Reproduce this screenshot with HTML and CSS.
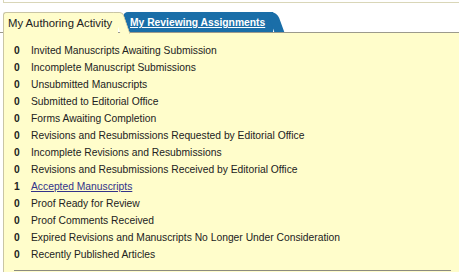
FILE: index.html
```html
<!DOCTYPE html>
<html lang="en">
<head>
    <meta charset="UTF-8">
    <title>Author Dashboard</title>
    <link rel="stylesheet" href="styles.css">
</head>
<body>
    <div class="topbox"></div>

    <div class="tabs">
        <div class="tab active">My Authoring Activity</div>
        <div class="tab other"><a href="#">My Reviewing Assignments</a></div>
    </div>

    <div class="panel">
        <ul class="queue">
            <li><b>0</b><span>Invited Manuscripts Awaiting Submission</span></li>
            <li><b>0</b><span>Incomplete Manuscript Submissions</span></li>
            <li><b>0</b><span>Unsubmitted Manuscripts</span></li>
            <li><b>0</b><span>Submitted to Editorial Office</span></li>
            <li><b>0</b><span>Forms Awaiting Completion</span></li>
            <li><b>0</b><span>Revisions and Resubmissions Requested by Editorial Office</span></li>
            <li><b>0</b><span>Incomplete Revisions and Resubmissions</span></li>
            <li><b>0</b><span>Revisions and Resubmissions Received by Editorial Office</span></li>
            <li><b>1</b><a href="#">Accepted Manuscripts</a></li>
            <li><b>0</b><span>Proof Ready for Review</span></li>
            <li><b>0</b><span>Proof Comments Received</span></li>
            <li><b>0</b><span>Expired Revisions and Manuscripts No Longer Under Consideration</span></li>
            <li><b>0</b><span>Recently Published Articles</span></li>
        </ul>
        <div class="rule"></div>
    </div>
</body>
</html>
```

FILE: styles.css
```css
body {
    margin: 0;
    font-family: "Liberation Sans", Arial, sans-serif;
    font-size: 10.3px;
    color: #222;
    background: #fff;
}
.topbox {
    height: 2px;
    margin-left: 3px;
    border-left: 1px solid #d9d6b8;
    border-bottom: 1px solid #d9d6b8;
}
.tabs {
    display: flex;
    margin-top: 9px;
    padding-left: 3px;
    height: 20px;
    border-bottom: 1px solid #9c9a8c;
}
.tab {
    position: relative;
    height: 20px;
    line-height: 21px;
    white-space: nowrap;
}
.tab.active {
    z-index: 2;
    padding: 0 4px;
    width: 106px;
    font-size: 11.3px;
    background: #fffdcb;
    border-left: 1px solid #c9c5a4;
    border-top: 1px solid #c9c5a4;
    border-top-left-radius: 3px;
    margin-bottom: -1px;
}
.tab.active::after {
    content: "";
    position: absolute;
    top: -1px;
    right: -5px;
    width: 9px;
    height: 21px;
    background: #fffdcb;
    border-top: 1px solid #c9c5a4;
    border-right: 1px solid #c9c5a4;
    border-top-right-radius: 4px;
    transform: skewX(19deg);
    transform-origin: top left;
}
.tab.other {
    z-index: 1;
    margin-left: 5px;
    padding: 0 8px 0 7px;
    background: #1a6ea8;
    border-top-left-radius: 5px;
    font-weight: bold;
}
.tab.other::after {
    content: "";
    position: absolute;
    top: 0;
    right: -4px;
    width: 10px;
    height: 20px;
    background: #1a6ea8;
    border-top-right-radius: 6px;
    transform: skewX(20deg);
    transform-origin: top left;
}
.tab.other a {
    position: relative;
    z-index: 1;
    color: #fff;
}
.panel {
    background: #fffdcb;
    border-left: 1px solid #c9c5a4;
    margin-left: 3px;
    padding: 9px 8px 1px 10px;
}
.queue {
    list-style: none;
    margin: 0;
    padding: 0;
}
.queue li {
    display: flex;
    height: 17px;
    line-height: 17px;
}
.queue b {
    width: 17px;
}
.queue a {
    color: #33338a;
}
.rule {
    margin-top: 7px;
    height: 1px;
    background: #8c8b80;
}
```
